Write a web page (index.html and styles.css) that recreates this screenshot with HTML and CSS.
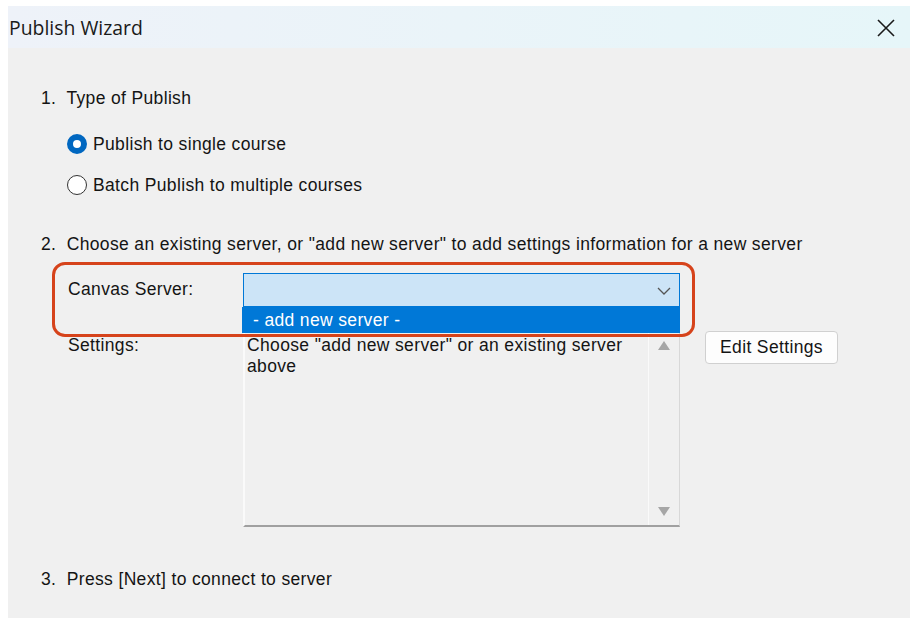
FILE: index.html
```html
<!DOCTYPE html>
<html>

<head>
    <title>Publish Wizard</title>
    <link rel="stylesheet" href="styles.css">
</head>

<body>
    <div class="window">
        <div class="titlebar">
            <span class="title">Publish Wizard</span>
            <svg class="close" width="20" height="20" viewBox="0 0 20 20">
                <path d="M2 2 L18 18 M18 2 L2 18" stroke="#1a1a1a" stroke-width="1.6" fill="none" />
            </svg>
        </div>

        <div class="content">
            <div class="step step-one">1.&nbsp; Type of Publish</div>
            <label class="radio first">
                <span class="dot checked"></span>
                <span>Publish to single course</span>
            </label>
            <label class="radio">
                <span class="dot"></span>
                <span>Batch Publish to multiple courses</span>
            </label>

            <div class="step step-two">2.&nbsp; Choose an existing server, or "add new server" to add settings information for a new server</div>

            <div class="server-grid">
                <div class="field-label server-label">Canvas Server:</div>
                <div class="combo">
                    <svg class="chevron" width="14" height="8" viewBox="0 0 14 8">
                        <path d="M1 1 L7 7 L13 1" stroke="#555" stroke-width="1.3" fill="none" />
                    </svg>
                    <!-- open drop list -->
                    <div class="droplist">- add new server -</div>
                </div>
                <div></div>

                <div class="field-label settings-label">Settings:</div>
                <div class="settings-box">
                    <div class="settings-text">Choose "add new server" or an existing server above</div>
                    <div class="scrollbar">
                        <span class="arrow up"></span>
                        <span class="arrow down"></span>
                    </div>
                </div>
                <div>
                    <button class="edit-btn">Edit Settings</button>
                </div>
            </div>

            <div class="step step-three">3.&nbsp; Press [Next] to connect to server</div>

            <!-- annotation around the server field -->
            <div class="highlight"></div>
        </div>
    </div>
</body>

</html>
```

FILE: styles.css
```css
body {
    margin: 0;
    padding: 0;
    background-color: #fff;
    font-family: "Liberation Sans", Arial, sans-serif;
    color: #141414;
}

.window {
    margin: 6px 3px 0 8px;
    width: 902px;
    height: 612px;
    background-color: #f0f0f0;
}

.titlebar {
    height: 42px;
    display: flex;
    align-items: center;
    justify-content: space-between;
    padding: 0 14px 0 1px;
    background: linear-gradient(90deg, #eef2f9, #e6f6f9);
}

.title {
    font-family: "Open Sans", "Noto Sans", sans-serif;
    font-size: 19.4px;
    color: #1a1a1a;
}

.close {
    margin-top: 1px;
}

.content {
    position: relative;
    padding: 40px 0 0 33px;
    font-size: 17.5px;
    letter-spacing: 0.35px;
}

.step {
    line-height: 20px;
}

.radio {
    display: flex;
    align-items: center;
    gap: 6px;
    margin-left: 26px;
    line-height: 20px;
    margin-top: 21px;
}

.radio.first {
    margin-top: 26px;
}

.dot {
    width: 20px;
    height: 20px;
    border: 1px solid #333;
    border-radius: 50%;
    background-color: #fff;
    box-sizing: border-box;
}

.dot.checked {
    border: 6px solid #0067c0;
}

.step-two {
    margin-top: 39px;
}

.server-grid {
    display: grid;
    grid-template-columns: 177px 437px auto;
    column-gap: 25px;
    row-gap: 26px;
    margin-top: 19px;
}

.field-label {
    padding-left: 27px;
    line-height: 20px;
}

.server-label {
    padding-top: 6px;
}

.settings-label {
    padding-top: 2px;
}

.combo {
    position: relative;
    height: 34px;
    box-sizing: border-box;
    border: 1px solid #0078d7;
    background-color: #cce4f7;
}

.chevron {
    position: absolute;
    right: 8px;
    top: 13px;
}

.droplist {
    position: absolute;
    left: -2px;
    right: -1px;
    top: 33px;
    height: 26px;
    line-height: 26px;
    padding-left: 11px;
    background-color: #0078d7;
    color: #fff;
    z-index: 2;
}

.settings-box {
    position: relative;
    height: 194px;
    box-sizing: border-box;
    border-left: 2px solid #fafafa;
    border-bottom: 2px solid #a0a0a0;
    border-right: 1px solid #d8d8d8;
    display: flex;
}

.settings-text {
    flex: 1;
    padding: 2px 0 0 2px;
    line-height: 21px;
}

.scrollbar {
    width: 30px;
    border-left: 1px solid #fafafa;
    display: flex;
    flex-direction: column;
    justify-content: space-between;
    align-items: center;
    padding: 8px 0 9px;
}

.arrow {
    width: 0;
    height: 0;
    border-left: 6px solid transparent;
    border-right: 6px solid transparent;
}

.arrow.up {
    border-bottom: 9px solid #a6a6a6;
}

.arrow.down {
    border-top: 9px solid #a6a6a6;
}

.edit-btn {
    width: 133px;
    height: 33px;
    margin-top: -2px;
    background-color: #fdfdfd;
    border: 1px solid #d0d0d0;
    border-radius: 4px;
    font-family: "Liberation Sans", Arial, sans-serif;
    font-size: 17.5px;
    letter-spacing: 0.35px;
    color: #141414;
}

.step-three {
    margin-top: 42px;
}

.highlight {
    position: absolute;
    left: 44px;
    top: 214px;
    width: 637px;
    height: 69px;
    border: 3px solid #d6431b;
    border-radius: 13px;
    z-index: 3;
}
```
